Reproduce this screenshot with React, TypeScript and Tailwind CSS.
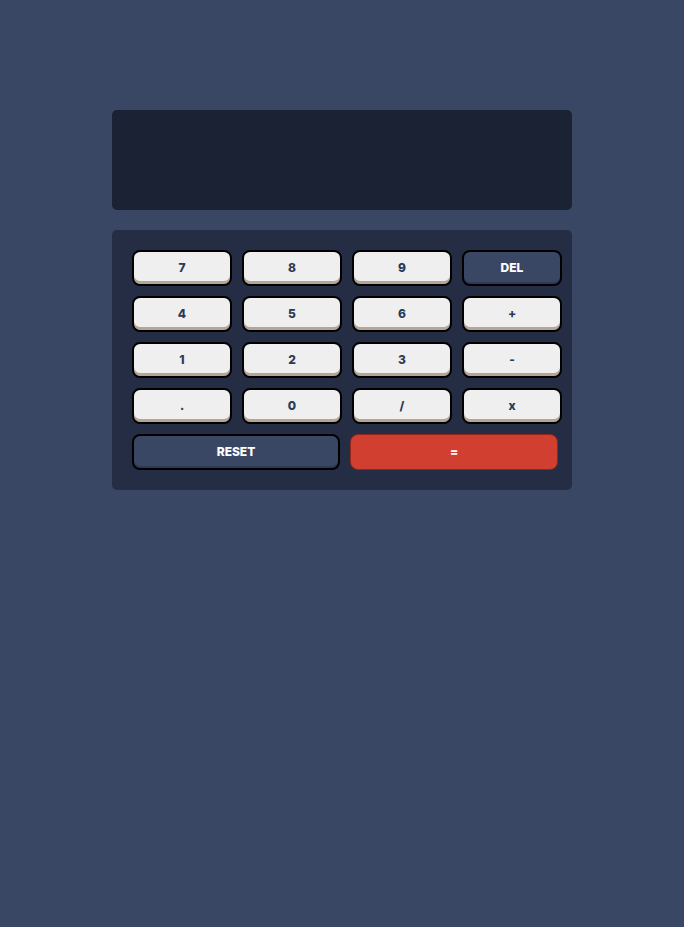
import React from 'react';

const keys = ['7', '8', '9', 'DEL', '4', '5', '6', '+', '1', '2', '3', '-', '.', '0', '/', 'x'];

function Key({ label }: { label: string }) {
  const isDel = label === 'DEL';
  return (
    <button
      className={
        isDel
          ? 'h-[36px] w-[100px] rounded-[8px] border-2 border-black bg-[#3a4764] text-[12px] font-extrabold text-white shadow-[inset_0_-2px_0_#2e3a55]'
          : 'h-[36px] w-[100px] rounded-[8px] border-2 border-black bg-[#efefef] text-[12px] font-extrabold text-[#2c3a55] shadow-[inset_0_-3px_0_#b4a597]'
      }
    >
      {label}
    </button>
  );
}

export default function App() {
  return (
    <div
      className="min-h-screen w-full bg-[#3a4764] pt-[110px]"
      style={{ fontFamily: 'Inter, "Liberation Sans", sans-serif' }}
    >
      <div className="mx-auto flex w-[460px] flex-col gap-5">
        <div className="h-[100px] rounded-[5px] bg-[#1b2234]" />
        <div className="rounded-[5px] bg-[#242d44] p-5">
          <div className="grid w-[430px] grid-cols-[repeat(4,100px)] gap-[10px]">
            {keys.map((k) => (
              <Key key={k} label={k} />
            ))}
          </div>
          <div className="mt-[10px] flex gap-[10px]">
            <button className="h-[36px] w-[208px] shrink-0 rounded-[8px] border-2 border-black bg-[#3a4764] text-[12px] font-extrabold text-white shadow-[inset_0_-2px_0_#2e3a55]">
              RESET
            </button>
            <button className="h-[36px] w-[208px] shrink-0 rounded-[8px] border border-[#93261a] bg-[#d03f2f] text-[12px] font-extrabold text-white">
              =
            </button>
          </div>
        </div>
      </div>
    </div>
  );
}
